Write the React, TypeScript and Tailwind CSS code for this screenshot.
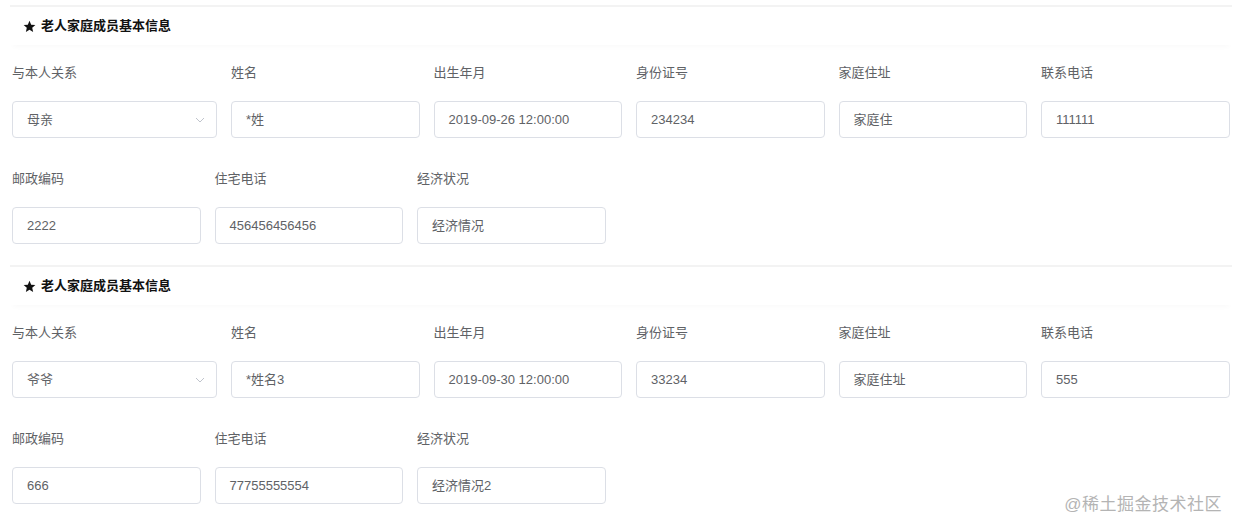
type Field = { label: string; value: string; select?: boolean };

type Member = { row1: Field[]; row2: Field[] };

const members: Member[] = [
  {
    row1: [
      { label: "与本人关系", value: "母亲", select: true },
      { label: "姓名", value: "*姓" },
      { label: "出生年月", value: "2019-09-26 12:00:00" },
      { label: "身份证号", value: "234234" },
      { label: "家庭住址", value: "家庭住" },
      { label: "联系电话", value: "111111" },
    ],
    row2: [
      { label: "邮政编码", value: "2222" },
      { label: "住宅电话", value: "456456456456" },
      { label: "经济状况", value: "经济情况" },
    ],
  },
  {
    row1: [
      { label: "与本人关系", value: "爷爷", select: true },
      { label: "姓名", value: "*姓名3" },
      { label: "出生年月", value: "2019-09-30 12:00:00" },
      { label: "身份证号", value: "33234" },
      { label: "家庭住址", value: "家庭住址" },
      { label: "联系电话", value: "555" },
    ],
    row2: [
      { label: "邮政编码", value: "666" },
      { label: "住宅电话", value: "77755555554" },
      { label: "经济状况", value: "经济情况2" },
    ],
  },
];

const font = { fontFamily: "'Liberation Sans', 'Noto Sans CJK SC', sans-serif" };

function FormField({ field }: { field: Field }) {
  return (
    <div className={field.select ? "w-[205px]" : "w-[188.5px]"}>
      <div className="h-5 leading-5 text-[13px] text-[#606266] mb-[18px]">{field.label}</div>
      <div className="h-[37px] flex items-center justify-between rounded-[4px] border border-[#dcdfe6] bg-white pl-[14px] pr-[11px] text-[13px] text-[#606266]">
        <span>{field.value}</span>
        {field.select && (
          <svg width="10" height="6" viewBox="0 0 10 6" fill="none">
            <path d="M1 1l4 4 4-4" stroke="#c0c4cc" strokeWidth="1" />
          </svg>
        )}
      </div>
    </div>
  );
}

function Section({ member }: { member: Member }) {
  return (
    <section>
      <div className="ml-[10px] mr-2 h-10 flex items-center gap-[5px] pl-[13px] border-t-2 border-[#f3f3f3] shadow-[0_5px_5px_-3px_rgba(0,0,0,0.025)]">
        <svg width="13" height="13" viewBox="0 0 24 24" fill="#111">
          <path d="M12 1.5l3.1 7.1 7.7.7-5.8 5.1 1.7 7.6L12 18l-6.7 4 1.7-7.6L1.2 9.3l7.7-.7z" />
        </svg>
        <span className="text-[13px] font-bold text-[#111]">老人家庭成员基本信息</span>
      </div>
      <div className="pl-3 pt-[18px] pb-[21px] flex flex-col gap-[31px]">
        <div className="flex gap-[14px]">
          {member.row1.map((f) => (
            <FormField key={f.label} field={f} />
          ))}
        </div>
        <div className="flex gap-[14px]">
          {member.row2.map((f) => (
            <FormField key={f.label} field={f} />
          ))}
        </div>
      </div>
    </section>
  );
}

export default function App() {
  return (
    <div className="relative w-[1240px] h-[532px] bg-white pt-[5px] overflow-hidden" style={font}>
      {members.map((m, i) => (
        <Section key={i} member={m} />
      ))}
      <div className="absolute right-[18px] bottom-[15px] text-[17px] text-[#b4b4b4] tracking-[0.5px]">
        @稀土掘金技术社区
      </div>
    </div>
  );
}
